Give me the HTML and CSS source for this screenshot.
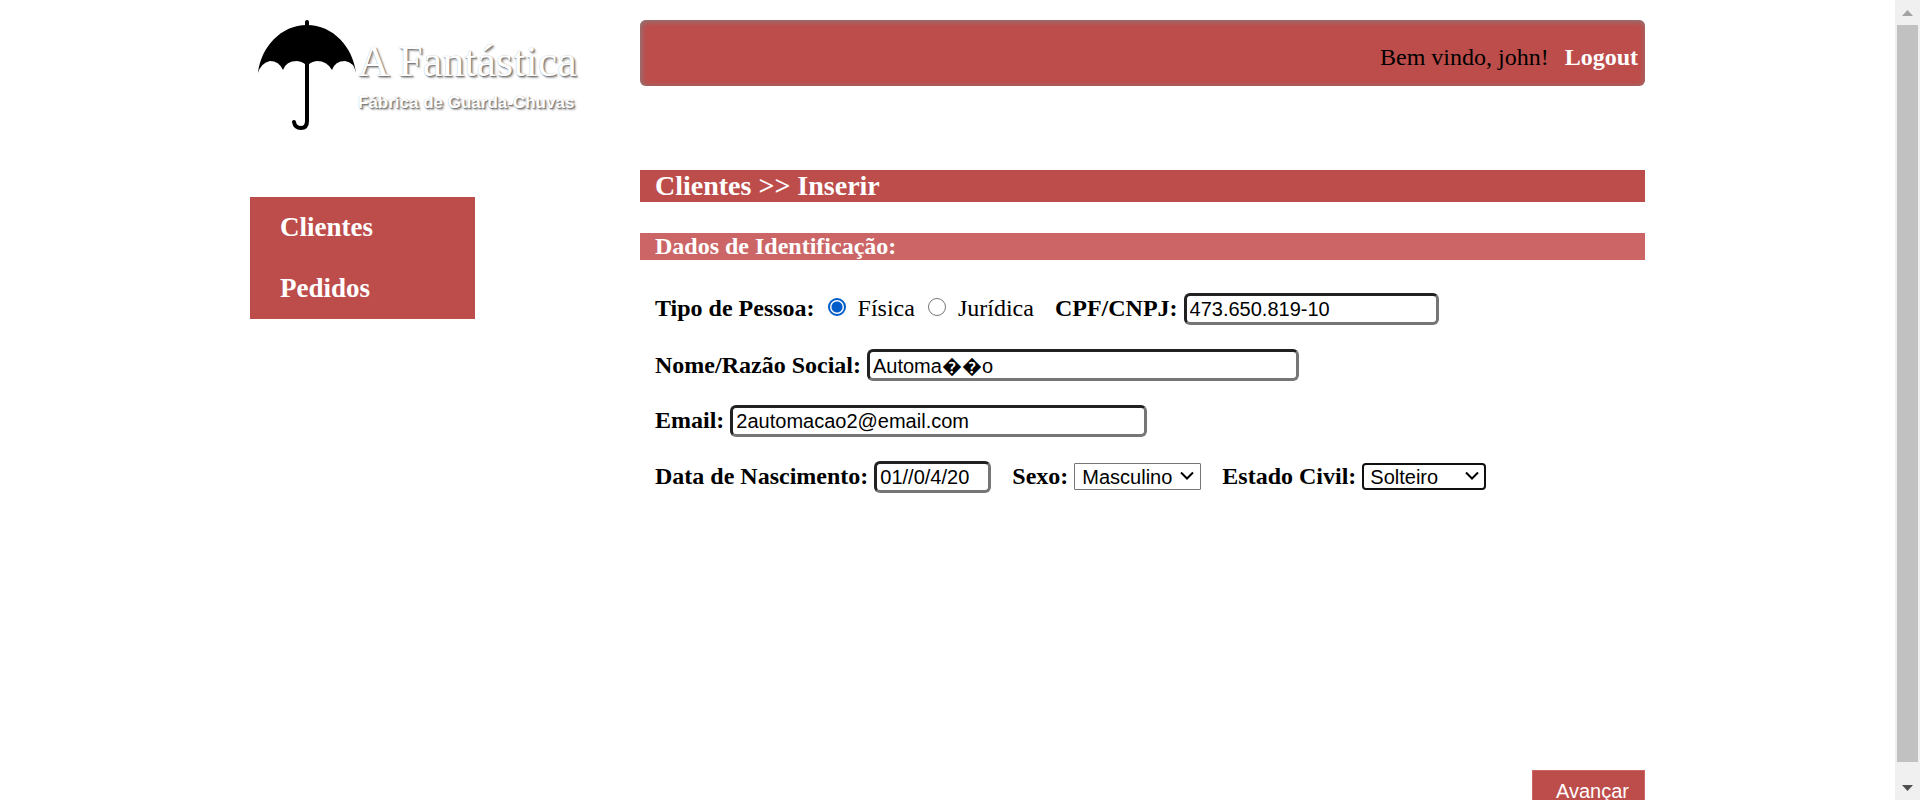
FILE: index.html
```html
<!DOCTYPE html>
<html lang="pt-BR">
<head>
<meta charset="utf-8">
<title>A Fantástica Fábrica de Guarda-Chuvas</title>
<link rel="stylesheet" href="styles.css">
</head>
<body>
<div class="viewport">
  <div class="page">
    <div class="side">
      <div class="logo">
        <svg class="umbrella" viewBox="0 0 100 114" aria-hidden="true">
          <path d="M49 8V101Q49 108 43 108Q37 108 36 102" fill="none" stroke="#000" stroke-width="4" stroke-linecap="round"/>
          <path d="M49 2V10" stroke="#000" stroke-width="4" stroke-linecap="round"/>
          <path d="M0 53C3 27 23 5 49 5C75 5 95 27 98 53Q96 42 87 41Q77 41 74 50Q69 41 59 41Q51 42 49 47Q47 42 39 41Q28 41 25 50Q21 41 12 41Q3 43 0 53Z" fill="#000"/>
        </svg>
        <div class="brand">
          <span class="brand-name">A Fantástica</span>
          <span class="brand-sub">Fábrica de Guarda-Chuvas</span>
        </div>
      </div>
      <nav class="menu">
        <a href="#clientes">Clientes</a>
        <a href="#pedidos">Pedidos</a>
      </nav>
    </div>
    <main class="main">
      <header class="welcome">
        <span>Bem vindo, john!</span>
        <a href="#logout">Logout</a>
      </header>
      <h1 class="title">Clientes &gt;&gt; Inserir</h1>
      <form class="form">
        <h2 class="section">Dados de Identificação:</h2>
        <div class="rows">
          <div class="row">
            <div class="field types" role="radiogroup" aria-labelledby="tipo">
              <span class="label" id="tipo">Tipo de Pessoa:</span>
              <label class="option"><input class="radio" type="radio" name="tipo" checked>Física</label>
              <label class="option"><input class="radio" type="radio" name="tipo">Jurídica</label>
            </div>
            <div class="field">
              <label class="label" for="cpf">CPF/CNPJ:</label>
              <input class="text cpf" id="cpf" type="text" value="473.650.819-10">
            </div>
          </div>
          <div class="row">
            <div class="field">
              <label class="label" for="nome">Nome/Razão Social:</label>
              <input class="text nome" id="nome" type="text" value="Automa&#xFFFD;&#xFFFD;o">
            </div>
          </div>
          <div class="row">
            <div class="field">
              <label class="label" for="email">Email:</label>
              <input class="text email" id="email" type="text" value="2automacao2@email.com">
            </div>
          </div>
          <div class="row">
            <div class="field">
              <label class="label" for="nasc">Data de Nascimento:</label>
              <input class="text date" id="nasc" type="text" value="01//0/4/20">
            </div>
            <div class="field">
              <label class="label" for="sexo">Sexo:</label>
              <span class="drop">
                <select class="select" id="sexo"><option>Masculino</option><option>Feminino</option></select>
                <svg class="chevron" viewBox="0 0 14 9" aria-hidden="true"><path d="M1 1.5L7 7.5L13 1.5"/></svg>
              </span>
            </div>
            <div class="field">
              <label class="label" for="civil">Estado Civil:</label>
              <span class="drop">
                <select class="select active" id="civil"><option>Solteiro</option><option>Casado</option></select>
                <svg class="chevron" viewBox="0 0 14 9" aria-hidden="true"><path d="M1 1.5L7 7.5L13 1.5"/></svg>
              </span>
            </div>
          </div>
        </div>
        <button class="next" type="button">Avançar</button>
      </form>
    </main>
  </div>
  <div class="scrollbar" aria-hidden="true">
    <svg class="arrow" viewBox="0 0 25 25"><path d="M7 16L12.500 10L18 16Z" fill="#a3a3a3"/></svg>
    <div class="track"><div class="thumb"></div></div>
    <svg class="arrow" viewBox="0 0 25 25"><path d="M7 10L12.500 16L18 10Z" fill="#505050"/></svg>
  </div>
</div>
</body>
</html>
```
FILE: styles.css
```css
* {
  box-sizing: border-box;
}

body {
  margin: 0;
  background: #fff;
  color: #000;
  font: 24px/28px "Liberation Serif", "Times New Roman", serif;
}

.viewport {
  display: flex;
  height: 100vh;
  overflow: hidden;
}

.page {
  flex: 1;
  display: grid;
  grid-template-columns: 390px minmax(0, 1005px);
  justify-content: center;
  align-items: start;
  padding-top: 20px;
}

/* Logo and menu */
.logo {
  display: flex;
  align-items: flex-start;
  height: 177px;
  padding-left: 8px;
}

.umbrella {
  width: 100px;
  height: 114px;
  flex: none;
}

.brand {
  display: flex;
  flex-direction: column;
  padding-top: 18px;
  color: #fff;
  white-space: nowrap;
  text-shadow: 1px 1px 1px #777, 2px 2px 2px #aaa, 0 0 1px #bbb;
}

.brand-name {
  font-size: 44px;
  line-height: 48px;
}

.brand-sub {
  font: bold 17px/34px "Liberation Sans", Arial, sans-serif;
}

.menu {
  width: 225px;
  background: #bd4d4b;
}

.menu a {
  display: block;
  padding-left: 30px;
  color: #fff;
  font-size: 27px;
  font-weight: bold;
  line-height: 61px;
  text-decoration: none;
}

/* Content */
.welcome {
  display: flex;
  justify-content: flex-end;
  gap: 16px;
  height: 66px;
  padding: 23px 7px 0;
  border-radius: 6px;
  background: #bd4d4b;
  box-shadow: inset 1px 1px 6px #808080;
}

.welcome a {
  color: #fff;
  font-weight: bold;
  text-decoration: none;
}

.title,
.section {
  padding-left: 15px;
  color: #fff;
}

.title {
  margin: 84px 0 31px;
  background: #bd4d4b;
  font-size: 28px;
  line-height: 32px;
}

.section {
  margin: 0;
  background: #cc6666;
  font-size: 24px;
  line-height: 27px;
}

.form {
  display: flex;
  flex-direction: column;
}

.rows {
  display: flex;
  flex-direction: column;
  gap: 24px;
  min-height: 444px;
  margin: 33px 0;
  padding-left: 15px;
}

.row {
  display: flex;
  align-items: baseline;
  gap: 21px;
  height: 32px;
}

.field {
  display: flex;
  align-items: baseline;
  gap: 6px;
}

.types {
  gap: 13px;
}

.label {
  font-weight: bold;
}

.option {
  display: flex;
  align-items: baseline;
  gap: 12px;
}

.radio {
  appearance: none;
  width: 18px;
  height: 18px;
  margin: 0 0 2px;
  border: 1px solid #767676;
  border-radius: 50%;
  background: #fff;
}

.radio:checked {
  border: 2px solid #005cc8;
  background: radial-gradient(circle, #005cc8 5px, #fff 6px);
}

.text {
  height: 32px;
  padding: 0 3px;
  border: 3px inset #767676;
  border-radius: 6px;
  background: #fff;
  color: #000;
  font: 20px "Liberation Sans", Arial, sans-serif;
}

.cpf {
  width: 255px;
}

.nome {
  width: 432px;
}

.email {
  width: 417px;
}

.date {
  width: 117px;
}

.drop {
  position: relative;
}

.select {
  appearance: none;
  width: 127px;
  height: 27px;
  padding: 0 7px;
  border: 1px solid #767676;
  border-radius: 1px;
  background: #fff;
  color: #000;
  font: 20px "Liberation Sans", Arial, sans-serif;
}

.active {
  width: 124px;
  padding: 0 6px;
  border: 2px solid #101010;
  border-radius: 4px;
}

.chevron {
  position: absolute;
  right: 7px;
  top: 9px;
  width: 14px;
  height: 9px;
  fill: none;
  stroke: #000;
  stroke-width: 2;
  pointer-events: none;
}

.next {
  align-self: flex-end;
  height: 42px;
  padding: 0 15px 0 23px;
  border: 1px solid #cc6666;
  background: #bd4d4b;
  color: #fff;
  font: 20px "Liberation Sans", Arial, sans-serif;
}

/* Scrollbar */
.scrollbar {
  display: flex;
  flex-direction: column;
  width: 25px;
  background: #f0f0f0;
}

.arrow {
  display: block;
  width: 25px;
  height: 25px;
}

.track {
  flex: 1;
  padding: 0 2px 13px;
}

.thumb {
  height: 100%;
  background: #c1c1c1;
}
```
